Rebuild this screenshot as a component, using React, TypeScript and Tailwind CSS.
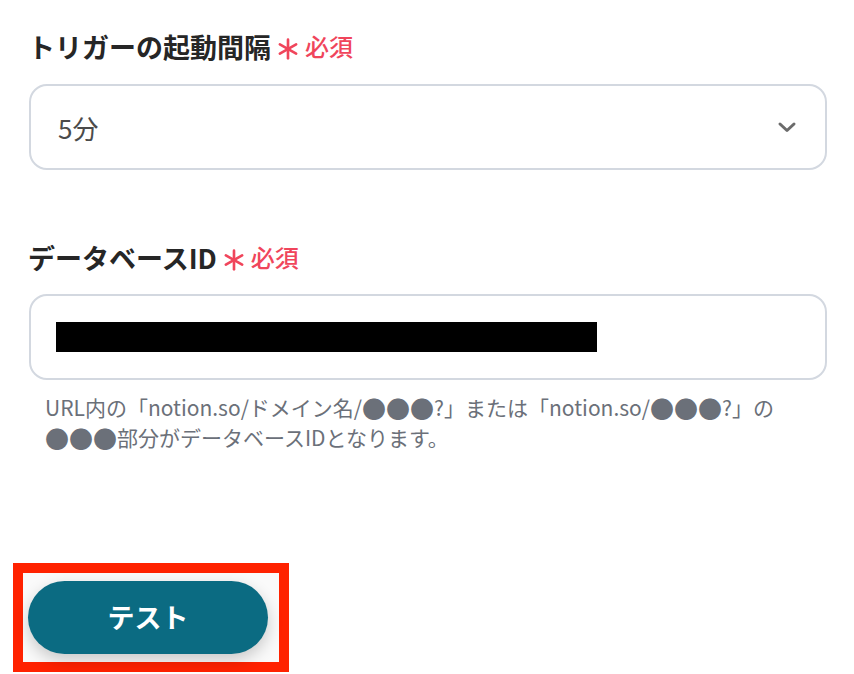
import React from "react";

const font = { fontFamily: '"Noto Sans CJK JP", "Noto Sans", sans-serif' };

// red asterisk + 必須 badge
const Required = () => (
  <span className="flex items-center gap-[6px] text-[#f0455b]">
    <svg width="22" height="22" viewBox="0 0 20 20" className="mt-[6px]">
      <g stroke="#f0455b" strokeWidth="2.4" strokeLinecap="round">
        <line x1="10" y1="1.5" x2="10" y2="18.5" />
        <line x1="2.6" y1="5.8" x2="17.4" y2="14.2" />
        <line x1="2.6" y1="14.2" x2="17.4" y2="5.8" />
      </g>
    </svg>
    <span className="text-[24px] font-medium leading-none">必須</span>
  </span>
);

const Label = ({ text }: { text: string }) => (
  <div className="flex items-center gap-[6px] h-[32px]">
    <span className="text-[27px] font-bold text-[#262626] leading-none">{text}</span>
    <Required />
  </div>
);

const Dots = () => <span className="text-[24px]">●●●</span>;

export default function App() {
  return (
    <div className="w-[854px] h-[674px] bg-white overflow-hidden" style={font}>
      <div className="pl-[28px] pr-[27px] pt-[30px]">
        <Label text="トリガーの起動間隔" />

        {/* select */}
        <div className="mt-[22px] ml-[1px] h-[86px] rounded-[18px] border-2 border-[#d3d8e0] flex items-center justify-between pl-[27px] pr-[28px]">
          <span className="text-[26px] text-[#4b4b4b]">5分</span>
          <svg width="20" height="12" viewBox="0 0 20 12">
            <path d="M3 3 L10 9.5 L17 3" fill="none" stroke="#6b6b6b" strokeWidth="3" strokeLinecap="round" strokeLinejoin="round" />
          </svg>
        </div>

        <div className="mt-[71px]">
          <Label text="データベースID" />
        </div>

        {/* input */}
        <div className="mt-[21px] ml-[1px] h-[86px] rounded-[18px] border-2 border-[#d3d8e0] flex items-center pl-[25px]">
          <div className="w-[541px] h-[30px] bg-black" />
        </div>

        <div className="mt-[13px] pl-[17px] text-[21px] text-[#6b7079] whitespace-nowrap">
          <div className="h-[30px] flex items-center">
            <span>URL内の「notion.so/ドメイン名/</span><Dots /><span>?」または「notion.so/</span><Dots /><span>?」の</span>
          </div>
          <div className="h-[30px] flex items-center">
            <Dots /><span>部分がデータベースIDとなります。</span>
          </div>
        </div>
      </div>

      {/* highlighted test button */}
      <div className="ml-[13px] mt-[110px] w-[276px] h-[109px] border-[10px] border-[#ff2200] bg-[#fafafa]">
        <button
          type="button"
          className="ml-[5px] mt-[8px] w-[240px] h-[73px] rounded-full bg-[#0b6b82] text-white text-[27px] font-bold shadow-[0_6px_16px_rgba(0,0,0,0.2)]"
        >
          テスト
        </button>
      </div>
    </div>
  );
}
